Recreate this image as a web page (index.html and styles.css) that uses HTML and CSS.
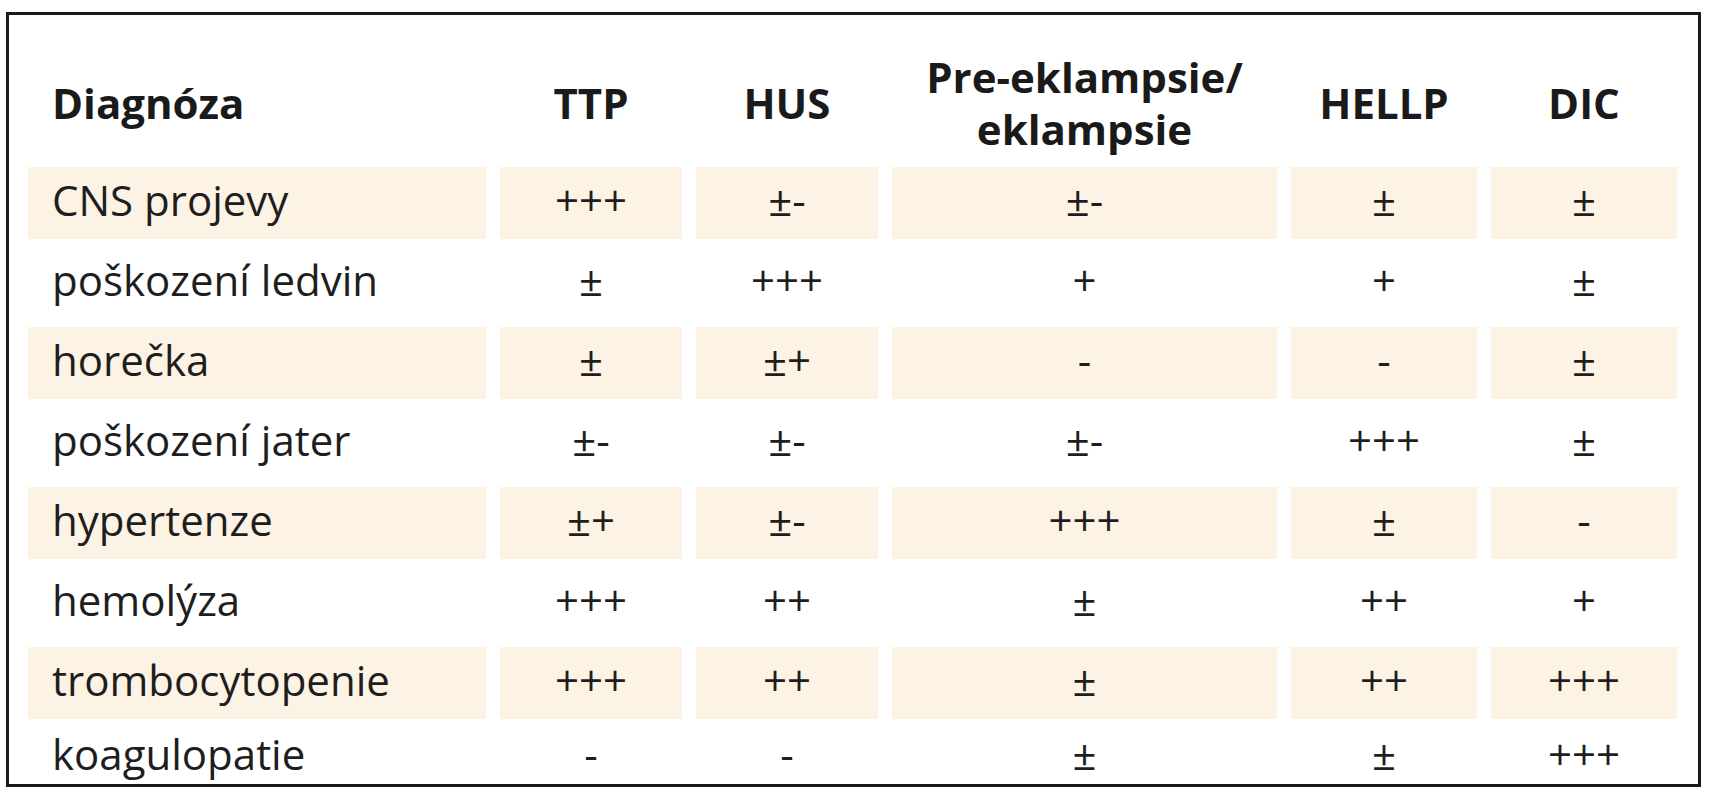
FILE: index.html
```html
<!DOCTYPE html>
<html lang="cs">
<head>
<meta charset="utf-8">
<title>Diagnóza</title>
<link rel="stylesheet" href="styles.css">
</head>
<body>
<div class="box">
  <div class="grid">
    <div class="row head">
      <div class="cell label">Diagnóza</div>
      <div class="cell">TTP</div>
      <div class="cell">HUS</div>
      <div class="cell">Pre-eklampsie/<br>eklampsie</div>
      <div class="cell">HELLP</div>
      <div class="cell">DIC</div>
    </div>
    <div class="row shade">
      <div class="cell label">CNS projevy</div>
      <div class="cell">+++</div>
      <div class="cell">±-</div>
      <div class="cell">±-</div>
      <div class="cell">±</div>
      <div class="cell">±</div>
    </div>
    <div class="row">
      <div class="cell label">poškození ledvin</div>
      <div class="cell">±</div>
      <div class="cell">+++</div>
      <div class="cell">+</div>
      <div class="cell">+</div>
      <div class="cell">±</div>
    </div>
    <div class="row shade">
      <div class="cell label">horečka</div>
      <div class="cell">±</div>
      <div class="cell">±+</div>
      <div class="cell">-</div>
      <div class="cell">-</div>
      <div class="cell">±</div>
    </div>
    <div class="row">
      <div class="cell label">poškození jater</div>
      <div class="cell">±-</div>
      <div class="cell">±-</div>
      <div class="cell">±-</div>
      <div class="cell">+++</div>
      <div class="cell">±</div>
    </div>
    <div class="row shade">
      <div class="cell label">hypertenze</div>
      <div class="cell">±+</div>
      <div class="cell">±-</div>
      <div class="cell">+++</div>
      <div class="cell">±</div>
      <div class="cell">-</div>
    </div>
    <div class="row">
      <div class="cell label">hemolýza</div>
      <div class="cell">+++</div>
      <div class="cell">++</div>
      <div class="cell">±</div>
      <div class="cell">++</div>
      <div class="cell">+</div>
    </div>
    <div class="row shade">
      <div class="cell label">trombocytopenie</div>
      <div class="cell">+++</div>
      <div class="cell">++</div>
      <div class="cell">±</div>
      <div class="cell">++</div>
      <div class="cell">+++</div>
    </div>
    <div class="row last">
      <div class="cell label">koagulopatie</div>
      <div class="cell">-</div>
      <div class="cell">-</div>
      <div class="cell">±</div>
      <div class="cell">±</div>
      <div class="cell">+++</div>
    </div>
  </div>
</div>
</body>
</html>
```
FILE: styles.css
```css
html, body {
  margin: 0;
  padding: 0;
  background: #ffffff;
}

body {
  font-family: "Open Sans", "Noto Sans", "DejaVu Sans", sans-serif;
  color: #1e1e1e;
}

.box {
  box-sizing: border-box;
  margin: 12px 0 0 6px;
  width: 1695px;
  height: 775px;
  border: 3px solid #1a1a1a;
  padding: 23px 0 0 19px;
}

.grid {
  display: grid;
  grid-template-columns: 458px 182px 182px 385px 186px 186px;
  grid-template-rows: 121px repeat(7, 72px) 57px;
  column-gap: 14px;
  row-gap: 8px;
}

.row {
  display: contents;
}

.cell {
  display: flex;
  align-items: center;
  justify-content: center;
  text-align: center;
  font-size: 42px;
  font-weight: 400;
  line-height: 56px;
  padding-bottom: 6px;
  box-sizing: border-box;
  white-space: nowrap;
}

.cell.label {
  justify-content: flex-start;
  text-align: left;
  padding-left: 24px;
}

.head .cell {
  font-weight: 700;
  font-size: 42px;
  line-height: 52px;
  padding-top: 8px;
  padding-bottom: 0;
  color: #1a1a1a;
}

.last .cell {
  padding-bottom: 4px;
}

.shade .cell {
  background: #fdf3e4;
}
```
